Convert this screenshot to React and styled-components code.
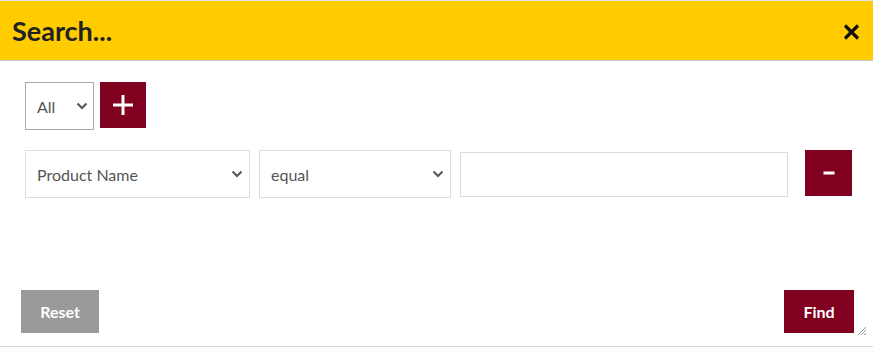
import React from "react";
import styled, { createGlobalStyle } from "styled-components";

const Global = createGlobalStyle`
  html, body { margin: 0; padding: 0; background: #fff; }
  body { font-family: Lato, "Open Sans", sans-serif; }
`;

const Dialog = styled.div`
  position: relative;
  width: 873px;
  height: 347px;
  border-top: 1px solid #e3e3e3;
  border-bottom: 1px solid #d6d6d6;
  box-sizing: border-box;
  display: flex;
  flex-direction: column;
  background: #fff;
`;

const Header = styled.div`
  height: 60px;
  box-sizing: border-box;
  background: #ffcc00;
  border-bottom: 1px solid #c9c9c9;
  display: flex;
  align-items: center;
  justify-content: space-between;
  padding: 0 13px 0 12px;
`;

const Title = styled.h1`
  margin: 0;
  font-family: Lato, sans-serif;
  font-weight: 700;
  font-size: 27px;
  color: #222;
`;

const CloseButton = styled.button`
  border: 0;
  background: none;
  padding: 0;
  width: 17px;
  height: 16px;
  margin-top: 2px;
  display: flex;
  cursor: pointer;
`;

const Body = styled.div`
  flex: 1;
  display: flex;
  flex-direction: column;
  padding: 21px 21px 0 25px;
  gap: 20px;
`;

const Row = styled.div`
  display: flex;
  align-items: flex-start;
  gap: ${(p) => p.$gap || 6}px;
`;

const SelectWrap = styled.div`
  position: relative;
  width: ${(p) => p.$w}px;
  height: 48px;
`;

const Select = styled.select`
  appearance: none;
  -webkit-appearance: none;
  width: 100%;
  height: 100%;
  box-sizing: border-box;
  border: 1px solid ${(p) => (p.$dark ? "#a9a9a9" : "#dcdcdc")};
  border-radius: 0;
  background: #fff;
  padding: 0 0 0 11px;
  font-family: Lato, sans-serif;
  font-size: 16px;
  color: #555;
  outline: none;
`;

const Chevron = styled.svg`
  position: absolute;
  right: ${(p) => p.$right || 7}px;
  top: 20px;
  width: 12px;
  height: 8px;
  pointer-events: none;
`;

const SquareButton = styled.button`
  width: ${(p) => p.$w}px;
  height: ${(p) => p.$h}px;
  margin-left: ${(p) => p.$ml || 0}px;
  border: 0;
  background: #800020;
  color: #fff;
  display: flex;
  align-items: center;
  justify-content: center;
  padding: 0;
  cursor: pointer;
`;

const TextInput = styled.input`
  width: 328px;
  height: 45px;
  margin-top: 2px;
  box-sizing: border-box;
  border: 1px solid #dcdcdc;
  border-radius: 0;
  padding: 0 10px;
  font-family: Lato, sans-serif;
  font-size: 16px;
  outline: none;
`;

const Footer = styled.div`
  display: flex;
  justify-content: space-between;
  padding: 0 19px 13px 21px;
`;

const ActionButton = styled.button`
  width: ${(p) => p.$w}px;
  height: 43px;
  border: 0;
  border-radius: 0;
  background: ${(p) => (p.$primary ? "#800020" : "#9a9a9a")};
  color: #fff;
  font-family: Lato, sans-serif;
  font-weight: 700;
  font-size: 16px;
  cursor: pointer;
`;

const Grip = styled.svg`
  position: absolute;
  right: 6px;
  bottom: 10px;
  width: 10px;
  height: 10px;
`;

const ChevronIcon = ({ right }) => (
  <Chevron $right={right} viewBox="0 0 12 8">
    <path d="M1.5 1.5 L6 6 L10.5 1.5" fill="none" stroke="#555" strokeWidth="2" />
  </Chevron>
);

export default function App() {
  return (
    <>
      <Global />
      <Dialog>
        <Header>
          <Title>Search...</Title>
          <CloseButton aria-label="close">
            <svg width="17" height="16" viewBox="0 0 17 16">
              <path d="M2 1.5 L15 14.5 M15 1.5 L2 14.5" stroke="#111" strokeWidth="3.2" />
            </svg>
          </CloseButton>
        </Header>
        <Body>
          <Row $gap={6}>
            <SelectWrap $w={69}>
              <Select $dark defaultValue="All">
                <option>All</option>
                <option>Any</option>
              </Select>
              <ChevronIcon right={6} />
            </SelectWrap>
            <SquareButton $w={46} $h={46} aria-label="add">
              <svg width="22" height="22" viewBox="0 0 22 22">
                <path d="M11 1 V21 M1 11 H21" stroke="#fff" strokeWidth="3" />
              </svg>
            </SquareButton>
          </Row>
          <Row $gap={9}>
            <SelectWrap $w={225}>
              <Select defaultValue="Product Name">
                <option>Product Name</option>
              </Select>
              <ChevronIcon right={7} />
            </SelectWrap>
            <SelectWrap $w={192}>
              <Select defaultValue="equal">
                <option>equal</option>
              </Select>
              <ChevronIcon right={7} />
            </SelectWrap>
            <TextInput />
            <SquareButton $w={47} $h={46} $ml={8} aria-label="remove">
              <svg width="12" height="4" viewBox="0 0 12 4">
                <rect x="0.5" y="0.5" width="11" height="3" fill="#fff" />
              </svg>
            </SquareButton>
          </Row>
        </Body>
        <Footer>
          <ActionButton $w={78}>Reset</ActionButton>
          <ActionButton $w={70} $primary>Find</ActionButton>
        </Footer>
        <Grip viewBox="0 0 10 10">
          <path d="M9 1 L1 9 M9 4 L4 9 M9 7 L7 9" stroke="#999" strokeWidth="1" />
        </Grip>
      </Dialog>
    </>
  );
}
